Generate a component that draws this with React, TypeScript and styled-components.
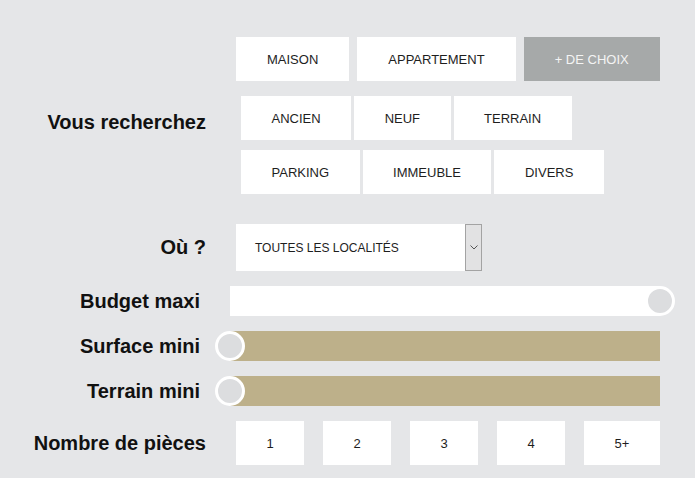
import React from 'react';
import styled, {createGlobalStyle} from "styled-components";

const GlobalStyle = createGlobalStyle`
  body {
    margin: 0;
    background-color: #e5e6e8;
    font-family: "Liberation Sans", Arial, sans-serif;
  }
`

const propertyRows = [
    {indent: 0, gap: 8, top: 0, pad: 31, items: ["MAISON", "APPARTEMENT", "+ DE CHOIX"]},
    {indent: 5, gap: 3, top: 15, pad: 30.5, items: ["ANCIEN", "NEUF", "TERRAIN"]},
    {indent: 5, gap: 3, top: 10, pad: 30.5, items: ["PARKING", "IMMEUBLE", "DIVERS"]},
]

const sliders = [
    {label: "Budget maxi", value: 100, light: true},
    {label: "Surface mini", value: 0, light: false},
    {label: "Terrain mini", value: 0, light: false},
]

const rooms = ["1", "2", "3", "4", "5+"]

function App() {
    return (
        <Page>
            <GlobalStyle/>
            <Form>
                <Row $align={"flex-start"}>
                    <Label $width={206} $offset={74}>Vous recherchez</Label>
                    <Choices>
                        {propertyRows.map((line, i) => (
                            <ChoiceLine key={i} $gap={line.gap} $indent={line.indent} $top={line.top}>
                                {line.items.map(item => (
                                    <ChoiceButton key={item} $pad={line.pad} $muted={item === "+ DE CHOIX"}>
                                        {item}
                                    </ChoiceButton>
                                ))}
                            </ChoiceLine>
                        ))}
                    </Choices>
                </Row>

                <Row $top={30}>
                    <Label $width={206}>Où ?</Label>
                    <SelectBox>
                        <SelectValue>TOUTES LES LOCALITÉS</SelectValue>
                        <SelectArrow>
                            <svg width="8" height="5" viewBox="0 0 8 5">
                                <path d="M0.5 0.5 L4 4 L7.5 0.5" fill="none" stroke="#555" strokeWidth="1"/>
                            </svg>
                        </SelectArrow>
                    </SelectBox>
                </Row>

                {sliders.map(s => (
                    <Row key={s.label} $top={15}>
                        <Label $width={200}>{s.label}</Label>
                        <Track $light={s.light}>
                            <Knob style={{left: `calc(${s.value}% - 15px)`}}/>
                        </Track>
                    </Row>
                ))}

                <Row $top={15}>
                    <Label $width={206}>Nombre de pièces</Label>
                    <Rooms>
                        {rooms.map(r => (
                            <RoomButton key={r} $wide={r === "5+"}>{r}</RoomButton>
                        ))}
                    </Rooms>
                </Row>
            </Form>
        </Page>
    );
}

export default App;

const Page = styled.div`
  width: 695px;
  height: 478px;
  padding-top: 37px;
  box-sizing: border-box;
  overflow: hidden;
`
const Form = styled.div`
  display: flex;
  flex-direction: column;
`
const Row = styled.div<{ $align?: string, $top?: number }>`
  display: flex;
  align-items: ${props => props.$align || "center"};
  gap: 30px;
  margin-top: ${props => props.$top || 0}px;
`
const Label = styled.div<{ $width: number, $offset?: number }>`
  width: ${props => props.$width}px;
  flex-shrink: 0;
  margin-top: ${props => props.$offset || 0}px;
  text-align: right;
  font-size: 20px;
  font-weight: 700;
  line-height: 23px;
  color: #111;
`
const Choices = styled.div`
  display: flex;
  flex-direction: column;
`
const ChoiceLine = styled.div<{ $gap: number, $indent: number, $top: number }>`
  display: flex;
  gap: ${props => props.$gap}px;
  margin-left: ${props => props.$indent}px;
  margin-top: ${props => props.$top}px;
`
const ChoiceButton = styled.button<{ $muted?: boolean, $pad: number }>`
  height: 44px;
  padding: 0 ${props => props.$pad}px;
  border: none;
  background-color: ${props => props.$muted ? "#a6a9a9" : "#fff"};
  color: ${props => props.$muted ? "#f4f4f4" : "#1e1e1e"};
  font-family: "Liberation Sans", Arial, sans-serif;
  font-size: 13px;
  cursor: pointer;
`
const SelectBox = styled.div`
  display: flex;
  height: 47px;
`
const SelectValue = styled.div`
  width: 210px;
  padding-left: 19px;
  display: flex;
  align-items: center;
  background-color: #fff;
  font-size: 12px;
  color: #1e1e1e;
`
const SelectArrow = styled.div`
  width: 15px;
  display: flex;
  align-items: center;
  justify-content: center;
  background-color: #e2e2e3;
  border: 1px solid #a3a3a3;
`
const Track = styled.div<{ $light?: boolean }>`
  position: relative;
  width: 430px;
  height: 30px;
  background-color: ${props => props.$light ? "#fff" : "#bdb08a"};
`
const Knob = styled.div`
  position: absolute;
  top: 0;
  width: 30px;
  height: 30px;
  box-sizing: border-box;
  border-radius: 50%;
  border: 3px solid #fff;
  background-color: #dcdddf;
`
const Rooms = styled.div`
  display: flex;
  gap: 19px;
`
const RoomButton = styled.button<{ $wide?: boolean }>`
  width: ${props => props.$wide ? 76 : 68}px;
  height: 44px;
  border: none;
  background-color: #fff;
  color: #1e1e1e;
  font-family: "Liberation Sans", Arial, sans-serif;
  font-size: 13px;
  cursor: pointer;
`
